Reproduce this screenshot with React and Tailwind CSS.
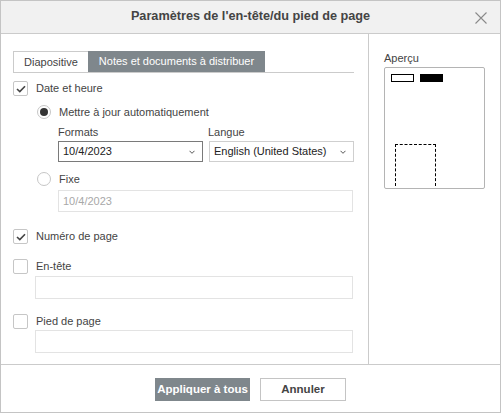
import React from 'react';

const font = { fontFamily: '"Liberation Sans", Arial, sans-serif' };

function Check({ checked }) {
  return (
    <span className="w-[15px] h-[15px] border border-[#c6c6c6] rounded-[2px] bg-white flex items-center justify-center shrink-0">
      {checked && (
        <svg width="10" height="8" viewBox="0 0 10 8">
          <path d="M1 4 L3.8 6.6 L9 1.2" fill="none" stroke="#444" strokeWidth="1.6" />
        </svg>
      )}
    </span>
  );
}

function Radio({ checked }) {
  return (
    <span className="w-[14px] h-[14px] border border-[#c6c6c6] rounded-full bg-white flex items-center justify-center shrink-0">
      {checked && <span className="w-[8px] h-[8px] rounded-full bg-[#333]" />}
    </span>
  );
}

function Chevron() {
  return (
    <svg width="6" height="4" viewBox="0 0 6 4" className="shrink-0">
      <path d="M0.5 0.8 L3 3.3 L5.5 0.8" fill="none" stroke="#555" strokeWidth="1" />
    </svg>
  );
}

export default function App() {
  return (
    <div style={font} className="w-[501px] h-[413px] border border-[#c4c4c4] bg-white flex flex-col text-[11px] text-[#444]">
      {/* header */}
      <div className="h-[33px] shrink-0 bg-[#f1f1f1] border-b border-[#cbcbcb] flex items-center justify-center relative">
        <span className="font-bold text-[12.7px] text-[#444]">Paramètres de l'en-tête/du pied de page</span>
        <svg width="12" height="12" viewBox="0 0 12 12" className="absolute right-[13px] top-[11px]">
          <path d="M0.5 0.5 L11.5 11.5 M11.5 0.5 L0.5 11.5" stroke="#8a8a8a" strokeWidth="1.1" />
        </svg>
      </div>

      {/* body */}
      <div className="h-[331px] shrink-0 flex border-b border-[#cbcbcb]">
        <div className="w-[368px] border-r border-[#cbcbcb] pl-[12px] pr-[14px] pt-[17px] flex flex-col">
          {/* tabs */}
          <div className="h-[22px] flex border-b border-[#cbcbcb]">
            <div className="w-[75px] border-l border-t border-[#cbcbcb] bg-white flex items-center justify-center">Diapositive</div>
            <div className="w-[177px] bg-[#7f878c] text-white flex items-center justify-center">Notes et documents à distribuer</div>
          </div>

          <div className="mt-[8px] h-[15px] flex items-center gap-[8px]">
            <Check checked />
            <span>Date et heure</span>
          </div>

          <div className="pl-[24px] flex flex-col">
            <div className="mt-[9px] h-[14px] flex items-center gap-[8px]">
              <Radio checked />
              <span>Mettre à jour automatiquement</span>
            </div>
            <div className="pl-[21px] flex flex-col">
              <div className="mt-[6px] h-[14px] flex items-center gap-[6px]">
                <span className="w-[144px]">Formats</span>
                <span>Langue</span>
              </div>
              <div className="mt-[2px] flex gap-[6px]">
                <div className="w-[145px] h-[21px] border border-[#7a7a7a] flex items-center justify-between pl-[4px] pr-[7px] text-[#222]">
                  <span>10/4/2023</span>
                  <Chevron />
                </div>
                <div className="w-[145px] h-[21px] border border-[#cfcfcf] flex items-center justify-between pl-[4px] pr-[7px] text-[#222]">
                  <span>English (United States)</span>
                  <Chevron />
                </div>
              </div>
            </div>
            <div className="mt-[10px] h-[14px] flex items-center gap-[8px]">
              <Radio />
              <span>Fixe</span>
            </div>
            <div className="pl-[21px]">
              <div className="mt-[4px] w-[295px] h-[22px] border border-[#e3e3e3] flex items-center pl-[4px] text-[#a8a8a8]">10/4/2023</div>
            </div>
          </div>

          <div className="mt-[17px] h-[15px] flex items-center gap-[8px]">
            <Check checked />
            <span>Numéro de page</span>
          </div>

          <div className="mt-[15px] h-[15px] flex items-center gap-[8px]">
            <Check />
            <span>En-tête</span>
          </div>
          <div className="pl-[22px] mt-[2px]">
            <div className="w-[318px] h-[23px] border border-[#e3e3e3]" />
          </div>

          <div className="mt-[15px] h-[15px] flex items-center gap-[8px]">
            <Check />
            <span>Pied de page</span>
          </div>
          <div className="pl-[22px] mt-[1px]">
            <div className="w-[318px] h-[23px] border border-[#e3e3e3]" />
          </div>
        </div>

        <div className="flex-1 pl-[15px] pt-[17px] flex flex-col">
          <span className="h-[15px] leading-[15px]">Aperçu</span>
          <div className="mt-[1px] w-[101px] h-[122px] border border-[#b4b4b4] rounded-[2px] flex flex-col pl-[6px] pt-[6px]">
            <div className="flex gap-[6px]">
              <span className="w-[23px] h-[8px] border border-black" />
              <span className="w-[23px] h-[8px] bg-black" />
            </div>
            <div className="mt-[62px] ml-[4px] w-[41px] h-[42px] border-t border-l border-r border-dashed border-black" />
          </div>
        </div>
      </div>

      {/* footer */}
      <div className="flex-1 flex items-center justify-center gap-[10px] pt-[2px]">
        <button className="w-[95px] h-[23px] bg-[#7f878c] text-white font-bold text-[11.5px]">Appliquer à tous</button>
        <button className="w-[86px] h-[23px] border border-[#c4c4c4] bg-white text-[#444] font-bold text-[11.5px]">Annuler</button>
      </div>
    </div>
  );
}
